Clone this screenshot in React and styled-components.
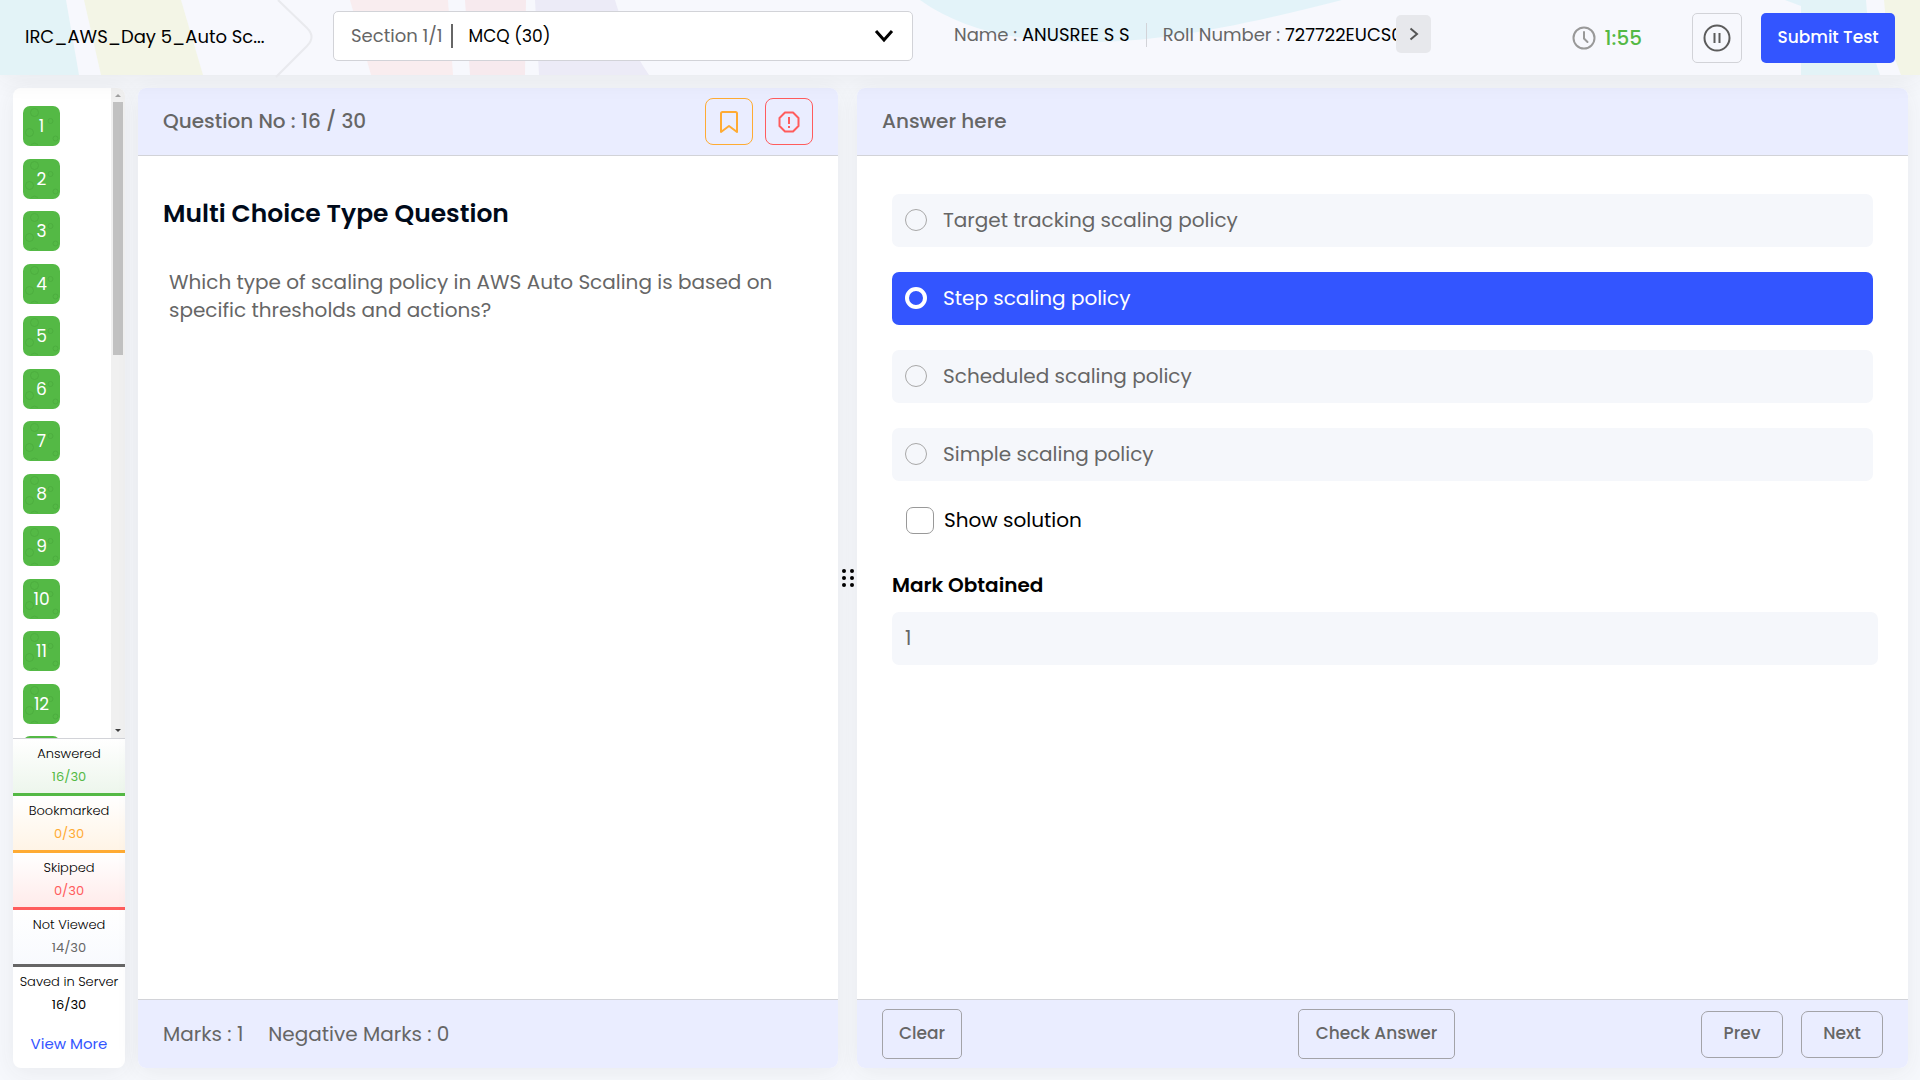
import React, { useState } from "react";
import styled, { createGlobalStyle } from "styled-components";

const c = {
  blue: "#3355ff",
  green: "#54b945",
  orange: "#ffab33",
  red: "#ff5c5c",
  grey: "#666666",
  ink: "#000a1a",
  tint: "#eaedff",
  soft: "#f5f7fb",
  line: "#d2d3d8",
};

const GlobalStyle = createGlobalStyle`
  *, *::before, *::after { box-sizing: border-box; }
  body { margin: 0; background: #f6f8fc; }
  body, button, input, select { font-family: Poppins, Inter, "Liberation Sans", sans-serif; }
  button { cursor: pointer; }
`;

const Page = styled.div`
  display: flex;
  flex-direction: column;
  height: 100vh;
  overflow: hidden;
  color: #000;
`;

const Header = styled.header`
  position: relative;
  display: flex;
  flex: none;
  align-items: center;
  height: 75px;
  padding: 0 25px;
  background: #f7f8fd;
  box-shadow: 0 4px 24px rgba(60, 60, 60, 0.07);
`;

const Decor = styled.svg`
  position: absolute;
  top: 0;
  left: 0;
  width: 1920px;
  height: 78px;
  overflow: visible;
  pointer-events: none;
`;

const TestTitle = styled.h1`
  position: relative;
  flex: none;
  width: 308px;
  margin: 0;
  padding-bottom: 2px;
  font-size: 18px;
  font-weight: 400;
  line-height: 24px;
  white-space: nowrap;
`;

const SectionPicker = styled.div`
  position: relative;
  display: flex;
  flex: none;
  align-items: center;
  width: 580px;
  height: 50px;
  margin-bottom: 4px;
  padding-left: 17px;
  background: #fff;
  border: 1px solid ${c.line};
  border-radius: 5px;
  svg { position: absolute; right: 18px; pointer-events: none; }
`;

const PickerLabel = styled.label`
  padding-right: 8px;
  border-right: 2px solid ${c.grey};
  color: ${c.grey};
  font-size: 18px;
  line-height: 24px;
`;

const Picker = styled.select`
  flex: 1;
  height: 100%;
  padding: 0 0 0 16px;
  appearance: none;
  background: transparent;
  border: 0;
  color: #000;
  font-size: 17px;
`;

const Candidate = styled.div`
  position: relative;
  display: flex;
  flex: none;
  align-items: center;
  width: 477px;
  height: 38px;
  margin: 0 0 8px 41px;
  padding-top: 2px;
  overflow: hidden;
`;

const Fact = styled.span`
  flex: none;
  padding-right: 16px;
  color: ${c.grey};
  font-size: 18px;
  line-height: 24px;
  white-space: nowrap;
  & + & { padding-left: 16px; border-left: 1px solid ${c.line}; }
  strong { color: #000; font-weight: 400; }
`;

const ScrollMore = styled.button`
  position: absolute;
  top: 0;
  right: 0;
  display: grid;
  place-items: center;
  width: 35px;
  height: 38px;
  padding: 0;
  background: #e7e8ec;
  border: 0;
  border-radius: 5px;
`;

const HeaderActions = styled.div`
  position: relative;
  display: flex;
  align-items: center;
  margin-left: auto;
`;

const Timer = styled.div`
  display: flex;
  align-items: center;
  gap: 9px;
  margin-right: 50px;
  color: ${c.green};
  font-size: 20px;
  font-weight: 500;
  line-height: 24px;
`;

const PauseButton = styled.button`
  display: grid;
  place-items: center;
  width: 50px;
  height: 50px;
  margin-right: 19px;
  padding: 0;
  background: transparent;
  border: 1px solid ${c.line};
  border-radius: 5px;
`;

const SubmitButton = styled.button`
  width: 134px;
  height: 50px;
  padding: 0 0 2px;
  background: ${c.blue};
  border: 0;
  border-radius: 5px;
  color: #fff;
  font-size: 17px;
  font-weight: 500;
  white-space: nowrap;
`;

const Main = styled.main`
  display: flex;
  flex: 1;
  min-height: 0;
  padding: 13px 12px 12px 13px;
`;

const Sidebar = styled.aside`
  display: flex;
  flex: none;
  flex-direction: column;
  width: 112px;
  margin-right: 13px;
  overflow: hidden;
  background: #fff;
  border-radius: 8px;
  box-shadow: 0 4px 24px rgba(60, 60, 60, 0.07);
`;

const ListArea = styled.div`
  display: flex;
  flex: 1;
  justify-content: space-between;
  min-height: 0;
`;

const NumberList = styled.nav`
  padding: 18px 0 0 10px;
  overflow: hidden;
`;

const NumberButton = styled.button`
  position: relative;
  display: block;
  width: 37px;
  height: 40px;
  margin-bottom: 12px;
  padding: 0;
  background: ${c.green};
  border: 0;
  border-radius: 7px;
  color: #fff;
  font-size: 17px;
  font-weight: 400;
  &:nth-child(odd) { margin-bottom: 13px; }
  svg { position: absolute; inset: 0; }
  span { position: relative; }
`;

const Track = styled.div`
  display: flex;
  flex-direction: column;
  align-items: center;
  justify-content: space-between;
  width: 14px;
  background: #f0f0f0;
`;

const TrackTop = styled.div`
  display: flex;
  flex-direction: column;
  align-items: center;
`;

const Thumb = styled.div`
  width: 10px;
  height: 253px;
  background: #c1c1c1;
`;

const Stats = styled.dl`
  flex: none;
  margin: 0;
  border-top: 1px solid ${c.line};
`;

const Stat = styled.div`
  height: 57px;
  padding-top: 3px;
  background: linear-gradient(#fff, ${(p) => p.$fade || "#fff"});
  border-bottom: ${(p) => (p.$line ? `3px solid ${p.$line}` : "0")};
  font-size: 13px;
  line-height: 23px;
  text-align: center;
  white-space: nowrap;
  dt { color: #000; font-weight: 300; }
  dd { margin: 0; color: ${(p) => p.$color}; }
`;

const ViewMore = styled.a`
  display: block;
  flex: none;
  padding: 8px 0 12px;
  color: ${c.blue};
  font-size: 15px;
  line-height: 24px;
  text-align: center;
  text-decoration: none;
`;

const Panel = styled.section`
  display: flex;
  flex: ${(p) => p.$grow} 1 0;
  flex-direction: column;
  min-width: 0;
  overflow: hidden;
  background: #fff;
  border-radius: 8px;
  box-shadow: 0 4px 24px rgba(60, 60, 60, 0.07);
`;

const Panels = styled.div`
  display: flex;
  flex: 1;
  min-width: 0;
`;

const Handle = styled.div`
  display: grid;
  flex: none;
  place-items: center;
  width: 19px;
`;

const PanelHeader = styled.header`
  display: flex;
  flex: none;
  align-items: center;
  gap: 12px;
  height: 68px;
  padding: 0 25px;
  background: ${c.tint};
  border-bottom: 1px solid ${c.line};
  h2 {
    margin: 0 auto 0 0;
    padding-bottom: 2px;
    color: ${c.grey};
    font-size: 20px;
    font-weight: 500;
    line-height: 28px;
  }
`;

const IconButton = styled.button`
  display: grid;
  place-items: center;
  width: 48px;
  height: 47px;
  padding: 0;
  background: transparent;
  border: 1px solid ${(p) => p.$color};
  border-radius: 8px;
  color: ${(p) => p.$color};
`;

const QuestionBody = styled.div`
  flex: 1;
  padding: 40px 25px;
  h3 {
    margin: 0 0 36px;
    color: ${c.ink};
    font-size: 25px;
    font-weight: 600;
    line-height: 36px;
  }
  p {
    margin: 0;
    padding: 0 6px;
    color: ${c.grey};
    font-size: 20px;
    line-height: 28px;
  }
`;

const AnswerBody = styled.div`
  flex: 1;
  padding: 38px 35px;
`;

const Options = styled.fieldset`
  display: flex;
  flex-direction: column;
  gap: 25px;
  margin: 0;
  padding: 0;
  border: 0;
`;

const Option = styled.label`
  display: flex;
  align-items: center;
  gap: 16px;
  height: 53px;
  padding: 0 13px 2px;
  background: ${(p) => (p.$on ? c.blue : c.soft)};
  border-radius: 7px;
  color: ${(p) => (p.$on ? "#fff" : c.grey)};
  font-size: 20px;
  cursor: pointer;
  input {
    width: 22px;
    height: 22px;
    margin: 0;
    appearance: none;
    border: ${(p) => (p.$on ? "4px solid #fff" : "1px solid #a8a8a8")};
    border-radius: 50%;
  }
`;

const ShowSolution = styled.label`
  display: flex;
  align-items: center;
  gap: 10px;
  margin: 25px 14px 37px;
  font-size: 20px;
  line-height: 28px;
  input {
    width: 28px;
    height: 27px;
    margin: 0;
    appearance: none;
    background: #fff;
    border: 1px solid #999;
    border-radius: 7px;
  }
`;

const MarkLabel = styled.label`
  display: block;
  margin-bottom: 13px;
  font-size: 20px;
  font-weight: 600;
  line-height: 28px;
`;

const MarkField = styled.input`
  display: block;
  width: calc(100% + 5px);
  height: 53px;
  padding: 0 13px 2px;
  background: ${c.soft};
  border: 0;
  border-radius: 7px;
  color: ${c.grey};
  font-size: 20px;
`;

const PanelFooter = styled.footer`
  display: grid;
  flex: none;
  grid-template-columns: 1fr auto 1fr;
  align-items: center;
  height: 69px;
  padding: 0 25px;
  background: ${c.tint};
  border-top: 1px solid ${c.line};
`;

const Marks = styled.div`
  display: flex;
  gap: 25px;
  color: ${c.grey};
  font-size: 20px;
  line-height: 28px;
  white-space: nowrap;
`;

const CheckSlot = styled.div`
  padding-right: 12px;
`;

const StepButtons = styled.div`
  display: flex;
  justify-content: flex-end;
  gap: 18px;
`;

const FooterButton = styled.button`
  height: ${(p) => (p.$step ? "47px" : "50px")};
  width: ${(p) => p.$width};
  padding: 0 0 2px;
  background: transparent;
  border: 1px solid #a3a3a8;
  border-radius: ${(p) => (p.$step ? "7px" : "5px")};
  color: ${c.grey};
  font-size: 17px;
  font-weight: 500;
  white-space: nowrap;
`;

const stats = [
  { label: "Answered", value: "16/30", color: c.green, line: c.green, fade: "#edf6ec" },
  { label: "Bookmarked", value: "0/30", color: c.orange, line: c.orange, fade: "#fff4e6" },
  { label: "Skipped", value: "0/30", color: c.red, line: c.red, fade: "#ffebea" },
  { label: "Not Viewed", value: "14/30", color: c.grey, line: c.grey, fade: "#f8fafe" },
  { label: "Saved in Server", value: "16/30", color: "#000" },
];

const answers = [
  "Target tracking scaling policy",
  "Step scaling policy",
  "Scheduled scaling policy",
  "Simple scaling policy",
];

// Only the first screenful of question numbers is mounted.
const mountedQuestions = Array.from({ length: 13 }, (_, i) => i + 1);

const Rings = () => (
  <svg width="37" height="40" fill="none" stroke="#4dae3f" aria-hidden="true">
    <circle cx="11.500" cy="6.500" r="4" />
    <circle cx="27.500" cy="15" r="2.500" />
    <circle cx="6.500" cy="26.500" r="4" />
    <circle cx="32.500" cy="32.500" r="2.500" />
    <path d="M8 38.500q3.500-3 7 0" />
  </svg>
);

const HeaderDecor = () => (
  <Decor viewBox="0 0 1920 78" aria-hidden="true">
    <path fill="#e3f3f7" d="M0 0H66L79 75H0z" />
    <path fill="#f3f5e6" d="M84 0H181L203 75H101z" />
    <path fill="#f9edef" d="M350 0H448L453 75H371z" />
    <path fill="#f7eaee" d="M465 0H526L525 75H470z" />
    <path fill="#ecebf7" d="M535 0H615Q628 45 649 75H539z" />
    <path fill="#e3f3f9" d="M920 0C965 32 1020 42 1090 42C1160 42 1240 26 1342 0z" />
    <path fill="#e3f3f9" d="M1785 0H1801V6z" />
    <path fill="#e3f3f7" d="M1801 0H1866Q1869 45 1880 75H1801z" />
    <path fill="#f3f5e6" d="M1884 0H1920V75H1901Q1886 40 1884 0z" />
    <path fill="none" stroke="#e9eaee" strokeWidth="2" d="M278 0L307 28Q316 37 307 46L276 77" />
  </Decor>
);

export default function App() {
  const [picked, setPicked] = useState(1);
  return (
    <Page>
      <GlobalStyle />
      <Header>
        <HeaderDecor />
        <TestTitle>IRC_AWS_Day 5_Auto Sc...</TestTitle>
        <SectionPicker>
          <PickerLabel htmlFor="section">Section 1/1</PickerLabel>
          <Picker id="section">
            <option>MCQ (30)</option>
          </Picker>
          <svg width="20" height="14" fill="none" stroke="#000" strokeWidth="3" aria-hidden="true">
            <path d="M2 2L10 11L18 2" />
          </svg>
        </SectionPicker>
        <Candidate>
          <Fact>Name : <strong>ANUSREE S S</strong></Fact>
          <Fact>Roll Number : <strong>727722EUCS013</strong></Fact>
          <ScrollMore aria-label="More details">
            <svg width="10" height="14" fill="none" stroke="#555" strokeWidth="2" aria-hidden="true">
              <path d="M1.500 1.500L8 7L1.500 12.500" />
            </svg>
          </ScrollMore>
        </Candidate>
        <HeaderActions>
          <Timer>
            <svg width="24" height="24" fill="none" stroke="#999" strokeWidth="2" aria-hidden="true">
              <circle cx="12" cy="12" r="10.500" />
              <path d="M12 6V12.500L15.500 16" strokeLinecap="round" />
            </svg>
            <time>1:55</time>
          </Timer>
          <PauseButton aria-label="Pause">
            <svg width="28" height="28" fill="none" stroke="#5c5c5c" strokeWidth="2" aria-hidden="true">
              <circle cx="14" cy="14" r="12.500" />
              <path d="M11.500 9V19M16.500 9V19" />
            </svg>
          </PauseButton>
          <SubmitButton>Submit Test</SubmitButton>
        </HeaderActions>
      </Header>

      <Main>
        <Sidebar>
          <ListArea>
            <NumberList aria-label="Questions">
              {mountedQuestions.map((n) => (
                <NumberButton key={n}>
                  <Rings />
                  <span>{n}</span>
                </NumberButton>
              ))}
            </NumberList>
            <Track>
              <TrackTop>
                <svg width="14" height="14" aria-hidden="true"><path fill="#a0a0a0" d="M4 9H10L7 6z" /></svg>
                <Thumb />
              </TrackTop>
              <svg width="14" height="14" aria-hidden="true"><path fill="#404040" d="M4 5H10L7 8z" /></svg>
            </Track>
          </ListArea>
          <Stats>
            {stats.map((s) => (
              <Stat key={s.label} $color={s.color} $line={s.line} $fade={s.fade}>
                <dt>{s.label}</dt>
                <dd>{s.value}</dd>
              </Stat>
            ))}
          </Stats>
          <ViewMore href="#more">View More</ViewMore>
        </Sidebar>

        <Panels>
          <Panel $grow={700}>
            <PanelHeader>
              <h2>Question No : 16 / 30</h2>
              <IconButton $color={c.orange} aria-label="Bookmark">
                <svg width="20" height="24" fill="none" stroke="currentColor" strokeWidth="2" strokeLinejoin="round" aria-hidden="true">
                  <path d="M2 3.500Q2 2 3.500 2H16.500Q18 2 18 3.500V22L10 16L2 22z" />
                </svg>
              </IconButton>
              <IconButton $color={c.red} aria-label="Report">
                <svg width="22" height="22" fill="none" stroke="currentColor" strokeWidth="2" strokeLinejoin="round" aria-hidden="true">
                  <path d="M7 1.500H15L20.500 7V15L15 20.500H7L1.500 15V7z" />
                  <path d="M11 6V13M11 15V17" />
                </svg>
              </IconButton>
            </PanelHeader>
            <QuestionBody>
              <h3>Multi Choice Type Question</h3>
              <p>Which type of scaling policy in AWS Auto Scaling is based on specific thresholds and actions?</p>
            </QuestionBody>
            <PanelFooter>
              <Marks>
                <span>Marks : 1</span>
                <span>Negative Marks : 0</span>
              </Marks>
            </PanelFooter>
          </Panel>

          <Handle>
            <svg width="12" height="18" aria-hidden="true">
              {[2, 9, 16].map((y) => (
                <React.Fragment key={y}>
                  <circle cx="2" cy={y} r="2" />
                  <circle cx="10" cy={y} r="2" />
                </React.Fragment>
              ))}
            </svg>
          </Handle>

          <Panel $grow={1051}>
            <PanelHeader>
              <h2>Answer here</h2>
            </PanelHeader>
            <AnswerBody>
              <Options aria-label="Answers">
                {answers.map((text, i) => (
                  <Option key={text} $on={i === picked}>
                    <input type="radio" name="answer" checked={i === picked} onChange={() => setPicked(i)} />
                    {text}
                  </Option>
                ))}
              </Options>
              <ShowSolution>
                <input type="checkbox" />
                Show solution
              </ShowSolution>
              <MarkLabel htmlFor="mark">Mark Obtained</MarkLabel>
              <MarkField id="mark" value="1" readOnly />
            </AnswerBody>
            <PanelFooter>
              <FooterButton $width="80px">Clear</FooterButton>
              <CheckSlot>
                <FooterButton $width="157px">Check Answer</FooterButton>
              </CheckSlot>
              <StepButtons>
                <FooterButton $step $width="82px">Prev</FooterButton>
                <FooterButton $step $width="82px">Next</FooterButton>
              </StepButtons>
            </PanelFooter>
          </Panel>
        </Panels>
      </Main>
    </Page>
  );
}
